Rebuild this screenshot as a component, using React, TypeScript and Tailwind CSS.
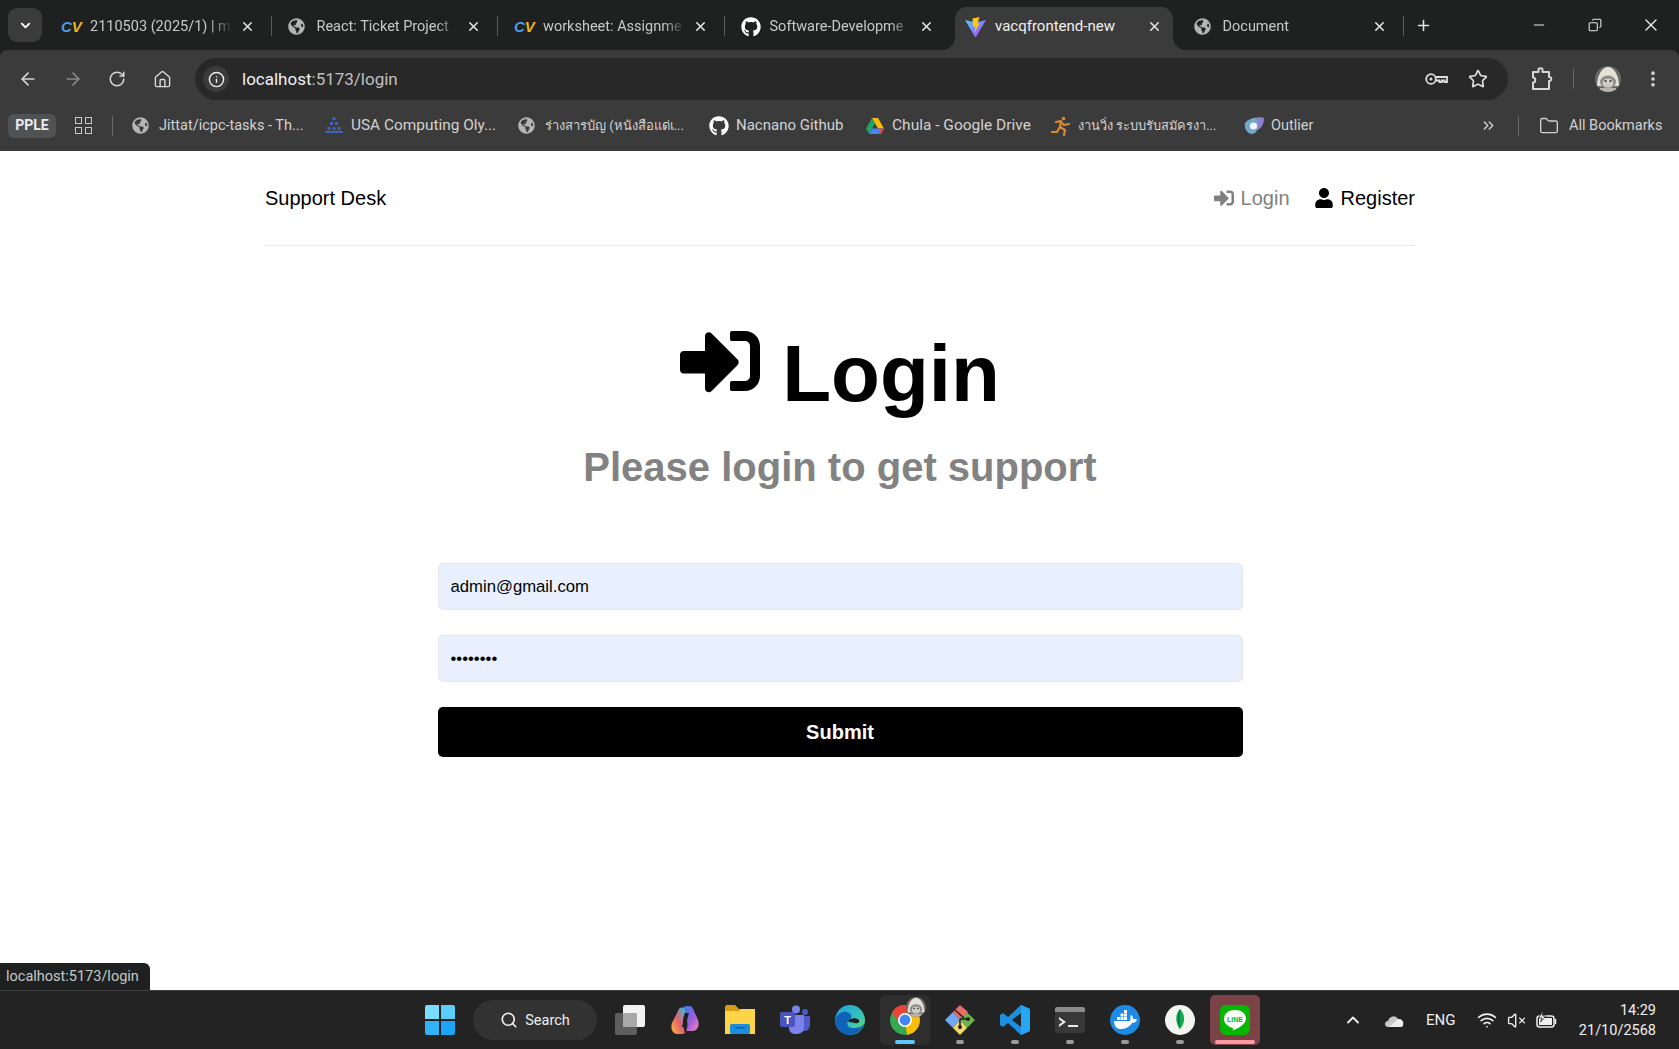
import React from 'react';
import { FaSignInAlt, FaUser, FaGithub, FaGlobeAmericas } from 'react-icons/fa';
import {
  ArrowLeft,
  ArrowRight,
  RotateCw,
  Home,
  Info,
  Star,
  EllipsisVertical,
  ChevronsRight,
  Folder,
  Plus,
  X,
  Minus,
  Copy,
  ChevronDown,
  ChevronUp,
  Search,
  Wifi,
  VolumeX,
} from 'lucide-react';

const ChromeFont = "font-['Roboto','Noto_Sans',sans-serif]";

const CvIcon = () => (
  <span className="w-[20px] shrink-0 text-[15px] font-bold italic leading-none font-['Liberation_Sans',sans-serif]">
    <span className="text-[#4d9be8]">C</span>
    <span className="text-[#f0b429]">V</span>
  </span>
);

const ViteIcon = () => (
  <svg width="21" height="20" viewBox="0 0 21 20" className="shrink-0">
    <defs>
      <linearGradient id="vitePurple" x1="0" y1="0" x2="1" y2="1">
        <stop offset="0" stopColor="#41d1ff" />
        <stop offset="1" stopColor="#bd34fe" />
      </linearGradient>
    </defs>
    <path d="M0 3 C4 4 8 5 10.5 5 C13 5 17 4 21 3 L11 20 H10 Z" fill="url(#vitePurple)" />
    <path d="M7.5 1.5 L14.5 0 L12.5 6.5 L15 6 L9.5 15.5 L10.5 9.5 L8 10 Z" fill="#ffc517" />
  </svg>
);

const tabs = [
  { icon: <CvIcon />, title: '2110503 (2025/1) | m' },
  { icon: <FaGlobeAmericas size={17} className="shrink-0 text-[#b5b5b5]" />, title: 'React: Ticket Project' },
  { icon: <CvIcon />, title: 'worksheet: Assignme' },
  { icon: <FaGithub size={20} className="shrink-0 text-white" />, title: 'Software-Developme' },
  { icon: <ViteIcon />, title: 'vacqfrontend-new', active: true },
  { icon: <FaGlobeAmericas size={17} className="shrink-0 text-[#b5b5b5]" />, title: 'Document' },
];

const DriveIcon = () => (
  <svg width="18" height="16" viewBox="0 0 18 16" className="shrink-0">
    <path d="M6 0 H12 L18 10.5 H12 Z" fill="#fbbc04" />
    <path d="M6 0 L0 10.5 L3 16 L9 5.5 Z" fill="#1fa463" />
    <path d="M3 16 H15 L18 10.5 H6 Z" fill="#4285f4" />
    <path d="M15 16 L18 10.5 H14.5 L13 16 Z" fill="#ea4335" />
  </svg>
);

const UsacoIcon = () => (
  <svg width="18" height="16" viewBox="0 0 18 16" className="shrink-0">
    <g fill="#3d64c4">
      <rect x="7.5" y="0" width="3" height="3" />
      <rect x="5" y="5" width="3" height="3" />
      <rect x="10" y="5" width="3" height="3" />
      <rect x="2.5" y="10" width="3" height="3" />
      <rect x="7.5" y="10" width="3" height="3" />
      <rect x="12.5" y="10" width="3" height="3" />
      <rect x="0" y="14" width="18" height="2" />
    </g>
  </svg>
);

const RunnerIcon = () => (
  <svg width="20" height="20" viewBox="0 0 20 20" className="shrink-0" fill="none" stroke="#d98a35" strokeWidth="2.2" strokeLinecap="round" strokeLinejoin="round">
    <circle cx="12.5" cy="2.5" r="1.8" fill="#d98a35" stroke="none" />
    <path d="M5 6 L10 5 L9 11 L14 14 L13 19" />
    <path d="M10 6 L13 9 L18 8" />
    <path d="M9 11 L6 16 L1 16" />
  </svg>
);

const OutlierIcon = () => (
  <svg width="20" height="20" viewBox="0 0 20 20" className="shrink-0">
    <path d="M9 2 C14 1 18 1 20 2 C20 8 17 14 12 14 Z" fill="#8a7fd0" />
    <path d="M1 7 C4 3 9 2 12 2 C16 8 14 18 8 18 C3 18 0 12 1 7 Z" fill="#6fa9c9" />
    <circle cx="9.5" cy="10" r="3.6" fill="#f4f4f4" />
  </svg>
);

const globeIcon = <FaGlobeAmericas size={17} className="shrink-0 text-[#b5b5b5]" />;

const bookmarks = [
  { icon: globeIcon, title: 'Jittat/icpc-tasks - Th...', className: 'w-[193px] gap-[10px]', textClass: '' },
  { icon: <UsacoIcon />, title: 'USA Computing Oly...', className: 'w-[193px] gap-[8px]', textClass: 'text-[15.4px]' },
  { icon: globeIcon, title: 'ร่างสารบัญ (หนังสือแด่เ...', className: 'w-[191px] gap-[10px]', textClass: 'text-[13px]' },
  { icon: <FaGithub size={20} className="shrink-0 text-white" />, title: 'Nacnano Github', className: 'w-[157px] gap-[7px]', textClass: 'text-[15px]' },
  { icon: <DriveIcon />, title: 'Chula - Google Drive', className: 'w-[185px] gap-[8px]', textClass: 'text-[15.5px]' },
  { icon: <RunnerIcon />, title: 'งานวิ่ง ระบบรับสมัครงา...', className: 'w-[193px] gap-[7px]', textClass: 'text-[12.8px]' },
  { icon: <OutlierIcon />, title: 'Outlier', className: 'w-[90px] gap-[7px]', textClass: '' },
];

function TabStrip() {
  return (
    <div className={`flex h-[50px] shrink-0 items-end bg-[#1f2120] ${ChromeFont}`}>
      <div className="mb-[8px] ml-[8px] mr-[5px] flex h-[34px] w-[34px] shrink-0 items-center justify-center rounded-[9px] bg-[#3b3b3b] text-white">
        <ChevronDown size={15} strokeWidth={3} />
      </div>
      {tabs.map((tab, i) =>
        tab.active ? (
          <div
            key={i}
            className="relative ml-[2px] mr-[6.5px] flex h-[43px] w-[218px] shrink-0 items-center rounded-t-[12px] bg-[#3b3b3b] pb-[4px] pl-[10px] pr-[11px] text-[#f0f0f0]"
          >
            <span className="absolute bottom-0 -left-[12px] h-[12px] w-[12px] bg-[radial-gradient(circle_at_0_0,transparent_11.5px,#3b3b3b_12px)]" />
            <span className="absolute bottom-0 -right-[12px] h-[12px] w-[12px] bg-[radial-gradient(circle_at_100%_0,transparent_11.5px,#3b3b3b_12px)]" />
            <span className="flex w-[30px] shrink-0 items-center">{tab.icon}</span>
            <span className="min-w-0 flex-1 overflow-hidden whitespace-nowrap text-[15px]">{tab.title}</span>
            <X size={15} strokeWidth={2.5} className="ml-[10px] shrink-0 text-[#e3e3e3]" />
          </div>
        ) : (
          <div key={i} className="relative flex h-[43px] w-[226.5px] shrink-0 items-center pb-[4px] pl-[14px] pr-[19px] text-[#c8c8c8]">
            <span className="flex w-[29px] shrink-0 items-center">{tab.icon}</span>
            <span className="min-w-0 flex-1 overflow-hidden whitespace-nowrap text-[14.5px] [mask-image:linear-gradient(to_right,black_85%,transparent)]">
              {tab.title}
            </span>
            <X size={15} strokeWidth={2.5} className="ml-[8px] shrink-0 text-[#e3e3e3]" />
            {i !== 3 && <span className="absolute right-[2px] top-[9px] h-[20px] w-px bg-[#5a5a5a]" />}
          </div>
        ),
      )}
      <div className="mb-[8px] ml-[9px] flex h-[34px] items-center text-[#e3e3e3]">
        <Plus size={17} strokeWidth={2.2} />
      </div>
      <div className="mb-[8px] ml-auto flex h-[34px] items-center text-[#e8e8e8]">
        <span className="flex w-[56px] justify-center"><Minus size={16} strokeWidth={1.8} /></span>
        <span className="flex w-[56px] justify-center"><Copy size={14} strokeWidth={1.8} className="-scale-x-100" /></span>
        <span className="flex w-[56px] justify-center"><X size={20} strokeWidth={1.6} /></span>
      </div>
    </div>
  );
}

const KeyIcon = () => (
  <svg width="23" height="14" viewBox="0 0 23 14" fill="none" stroke="#dddddd" strokeWidth="1.8" className="ml-auto">
    <circle cx="6" cy="7" r="4.8" />
    <circle cx="6" cy="7" r="1.5" fill="#dddddd" stroke="none" />
    <path d="M11 5 H22 V10 H19.5 V8.5 H17 V10 H14.5 V8.5 H11" />
  </svg>
);

const ExtensionIcon = () => (
  <svg width="22" height="24" viewBox="0 0 22 24" fill="none" stroke="#d6d6d6" strokeWidth="2" strokeLinejoin="round" className="ml-[23px]">
    <path d="M2 5 H7.5 V2.5 C7.5 0.8 11.5 0.8 11.5 2.5 V5 H18 V10 C21 9.5 21 14.5 18 14 V22 H2 V15.5 C5 15.5 5 10.5 2 10.5 Z" />
  </svg>
);

const Avatar = ({ size, className }: { size: number; className?: string }) => (
  <svg width={size} height={size} viewBox="0 0 26 26" className={className}>
    <defs>
      <clipPath id={`avatarClip${size}`}>
        <circle cx="13" cy="13" r="13" />
      </clipPath>
    </defs>
    <g clipPath={`url(#avatarClip${size})`}>
      <rect width="26" height="26" fill="#6d6a66" />
      <path d="M2 20 C2 8 8 1 13 1 C18 1 24 8 24 20 Z" fill="#e4e0d8" />
      <ellipse cx="13" cy="16" rx="8" ry="6.5" fill="#8d8a85" />
      <ellipse cx="13" cy="17" rx="5.5" ry="4.5" fill="#cfcbc4" />
      <circle cx="10.5" cy="15" r="1" fill="#2d2b29" />
      <circle cx="15.5" cy="15" r="1" fill="#2d2b29" />
      <rect x="5" y="22" width="16" height="4" fill="#b8b4ad" />
    </g>
  </svg>
);

function Toolbar() {
  return (
    <div className={`flex h-[50px] shrink-0 items-start rounded-t-[8px] bg-[#3b3b3b] pt-[8px] text-[#d6d6d6] ${ChromeFont}`}>
      <div className="flex h-[42px] items-center pl-[18px]">
        <span className="w-[45px]"><ArrowLeft size={20} strokeWidth={2} /></span>
        <span className="w-[45px] text-[#8a8a8a]"><ArrowRight size={20} strokeWidth={2} /></span>
        <span className="w-[45px]"><RotateCw size={18} strokeWidth={2} /></span>
        <span className="w-[42px]"><Home size={19} strokeWidth={1.8} /></span>
      </div>
      <div className="flex h-[42px] w-[1313px] items-center rounded-full bg-[#282828] pl-[8px] pr-[20px]">
        <span className="flex h-[26px] w-[26px] items-center justify-center rounded-full bg-[#3b3b3b] text-[#eeeeee]">
          <Info size={17} strokeWidth={2} />
        </span>
        <span className="ml-[13px] pt-[1px] text-[17px] text-[#f0f0f0]">
          localhost<span className="text-[#c0c0c0]">:5173/login</span>
        </span>
        <KeyIcon />
        <Star size={20} strokeWidth={2} className="ml-[20px] text-[#dddddd]" />
      </div>
      <div className="flex h-[42px] items-center">
        <ExtensionIcon />
        <span className="ml-[20px] h-[20px] w-px bg-[#6a6a6a]" />
        <Avatar size={26} className="ml-[21px]" />
        <EllipsisVertical size={20} strokeWidth={2.4} className="ml-[22px]" />
      </div>
    </div>
  );
}

function BookmarksBar() {
  return (
    <div className={`flex h-[51px] shrink-0 items-center bg-[#3b3b3b] text-[14.5px] text-[#d2d2d2] ${ChromeFont}`}>
      <span className="ml-[8px] flex h-[24px] w-[48px] items-center justify-center rounded-[6px] bg-[#505356] text-[14px] font-bold text-[#ececec]">
        PPLE
      </span>
      <span className="ml-[19px] grid grid-cols-2 gap-[3px]">
        <span className="h-[7px] w-[7px] border-[1.5px] border-[#c8c8c8]" />
        <span className="h-[7px] w-[7px] border-[1.5px] border-[#c8c8c8]" />
        <span className="h-[7px] w-[7px] border-[1.5px] border-[#c8c8c8]" />
        <span className="h-[7px] w-[7px] border-[1.5px] border-[#c8c8c8]" />
      </span>
      <span className="ml-[20px] h-[20px] w-px bg-[#6a6a6a]" />
      <div className="ml-[19px] flex items-center">
        {bookmarks.map((b) => (
          <div key={b.title} className={`flex shrink-0 items-center ${b.className}`}>
            {b.icon}
            <span className={`whitespace-nowrap ${b.textClass}`}>{b.title}</span>
          </div>
        ))}
      </div>
      <ChevronsRight size={17} className="ml-[146px] text-[#cfcfcf]" />
      <span className="ml-[21px] h-[20px] w-px bg-[#6a6a6a]" />
      <Folder size={20} strokeWidth={1.6} className="ml-[20px]" />
      <span className="ml-[10px] whitespace-nowrap">All Bookmarks</span>
    </div>
  );
}

function LoginPage() {
  return (
    <main className="relative min-h-0 flex-1 overflow-hidden bg-white pl-px font-['Liberation_Sans',Arial,sans-serif] text-black">
      <div className="mx-auto w-[1150px]">
        <header className="mb-[80px] flex h-[95px] items-center justify-between border-b border-[#e6e6e6] text-[20px]">
          <span>Support Desk</span>
          <ul className="flex items-center gap-[24px]">
            <li className="flex items-center gap-[7px] text-[#808080]">
              <FaSignInAlt size={20} /> Login
            </li>
            <li className="flex items-center gap-[7px]">
              <FaUser size={20} /> Register
            </li>
          </ul>
        </header>
        <section className="mb-[72px] text-center font-bold">
          <h1 className="mb-[21px] flex items-center justify-center gap-[22px] text-[80px] leading-[96px]">
            <FaSignInAlt size={80} className="-mt-[26px]" /> Login
          </h1>
          <p className="text-[40px] leading-[48px] text-[#828282]">Please login to get support</p>
        </section>
        <form className="mx-auto flex w-[805px] flex-col gap-[25px]" onSubmit={(e) => e.preventDefault()}>
          <input
            type="email"
            readOnly
            value="admin@gmail.com"
            className="h-[47px] w-full rounded-[5px] border border-[#e6e6e6] bg-[#e8f0fe] px-[12px] text-[16.7px] text-black outline-none"
          />
          <input
            type="password"
            readOnly
            value="password"
            className="h-[47px] w-full rounded-[5px] border border-[#e6e6e6] bg-[#e8f0fe] px-[12px] text-[16.7px] text-black outline-none"
          />
          <button type="submit" className="h-[50px] w-full rounded-[5px] bg-black text-[20px] font-bold text-white">
            Submit
          </button>
        </form>
      </div>
      <div className={`absolute bottom-0 left-0 flex h-[27px] w-[150px] items-center rounded-tr-[6px] bg-[#1f2120] pl-[6px] pt-[1px] text-[14.5px] text-[#c8c8c8] ${ChromeFont}`}>
        localhost:5173/login
      </div>
    </main>
  );
}

const WindowsIcon = () => (
  <span className="grid h-[30px] w-[30px] grid-cols-2 gap-[1.5px]">
    <span className="rounded-tl-[2px] bg-[#7adcfb]" />
    <span className="rounded-tr-[2px] bg-[#5ccdfa]" />
    <span className="rounded-bl-[2px] bg-[#2fb4f7]" />
    <span className="rounded-br-[2px] bg-[#1ea4f4]" />
  </span>
);

const TaskIcons: { key: string; node: React.ReactNode; dot?: boolean }[] = [
  {
    key: 'taskview',
    node: (
      <svg width="30" height="30" viewBox="0 0 30 30">
        <rect x="0" y="8" width="22" height="22" rx="2" fill="#5d5d5d" />
        <rect x="8" y="0" width="22" height="22" rx="2" fill="#f2f2f2" />
        <rect x="8" y="8" width="14" height="14" rx="1" fill="#a8a8a8" />
      </svg>
    ),
  },
  {
    key: 'copilot',
    node: (
      <svg width="30" height="30" viewBox="0 0 30 30">
        <defs>
          <linearGradient id="copA" x1="0" y1="0" x2="1" y2="1">
            <stop offset="0" stopColor="#2f7fe8" />
            <stop offset="0.55" stopColor="#a05be0" />
            <stop offset="1" stopColor="#f08ab0" />
          </linearGradient>
          <linearGradient id="copB" x1="0" y1="1" x2="1" y2="0">
            <stop offset="0" stopColor="#f7c033" />
            <stop offset="0.5" stopColor="#e85f70" />
            <stop offset="1" stopColor="#34c0d8" />
          </linearGradient>
        </defs>
        <path d="M13 3 C14 1 16 1 19 1 C22 1 23 3 24 6 L28 15 C30 21 27 26 22 26 H16 C19 20 17 10 13 3 Z" fill="url(#copA)" />
        <path d="M9 4 C11 2 14 2 15 5 L15 8 C12 14 13 22 15 28 C14 29 11 29 8 29 C3 29 0 24 2 18 Z" fill="url(#copB)" />
        <path d="M15 8 L19 8 L15 22 L12 22 Z" fill="#1f1f1f" />
      </svg>
    ),
  },
  {
    key: 'explorer',
    node: (
      <svg width="30" height="30" viewBox="0 0 30 30">
        <path d="M0 2 C0 1 1 0 2 0 H10 L14 4 H30 V28 H0 Z" fill="#d99b12" />
        <path d="M0 6 H14 L16 4 H30 V29 H0 Z" fill="#ffd447" />
        <rect x="5" y="19" width="20" height="10" rx="1.5" fill="#1c8fdc" />
        <rect x="10" y="22" width="10" height="1.5" fill="#0c5e9e" />
      </svg>
    ),
  },
  {
    key: 'teams',
    node: (
      <svg width="30" height="30" viewBox="0 0 30 30">
        <circle cx="16" cy="4.5" r="4" fill="#7b83eb" />
        <circle cx="25" cy="7" r="3" fill="#5059c9" />
        <path d="M20 11 H30 V20 C30 24 27 26 24 26 C22 26 20 24 20 21 Z" fill="#5059c9" />
        <path d="M9 10 H24 V23 C24 27 20 29 16 29 C12 29 9 27 9 23 Z" fill="#7b83eb" />
        <rect x="0" y="7" width="15" height="15" rx="2" fill="#4b53bc" />
        <text x="7.5" y="19" fontSize="11" fontWeight="700" textAnchor="middle" fill="#ffffff" fontFamily="Liberation Sans">T</text>
      </svg>
    ),
  },
  {
    key: 'edge',
    node: (
      <svg width="30" height="30" viewBox="0 0 30 30">
        <defs>
          <linearGradient id="edgeA" x1="0" y1="0" x2="1" y2="1">
            <stop offset="0" stopColor="#1f9fe0" />
            <stop offset="0.6" stopColor="#35c4b8" />
            <stop offset="1" stopColor="#6fe05f" />
          </linearGradient>
        </defs>
        <circle cx="15" cy="15" r="15" fill="url(#edgeA)" />
        <path d="M30 17 C28 26 20 30 15 30 C6 30 0 23 0 15 C2 8 9 5 14 8 C19 11 15 14 13 16 C11 19 13 23 18 23 C23 23 28 22 30 17 Z" fill="#0e63b8" />
        <path d="M13 16 C15 13 21 12 24 15 C25 17 23 19 20 18 C17 17 14 18 13 16 Z" fill="#1f1f1f" />
      </svg>
    ),
  },
  {
    key: 'chrome',
    dot: true,
    node: (
      <span className="relative block h-[30px] w-[30px]">
        <svg width="30" height="30" viewBox="0 0 30 30">
          <circle cx="15" cy="15" r="15" fill="#34a853" />
          <path d="M15 15 L28 8 A15 15 0 0 1 17 30 Z" fill="#fbbc04" />
          <path d="M2 7.5 A15 15 0 0 1 28 7.5 L15 7.5 L9 18 Z" fill="#ea4335" />
          <circle cx="15" cy="15" r="7" fill="#ffffff" />
          <circle cx="15" cy="15" r="5.4" fill="#4285f4" />
        </svg>
        <Avatar size={20} className="absolute -right-[6px] -top-[8px]" />
      </span>
    ),
  },
  {
    key: 'gitkraken',
    dot: true,
    node: (
      <svg width="30" height="30" viewBox="0 0 30 30">
        <path d="M0 15 L8 7 L15 15 L8 23 Z" fill="#6fa8f5" />
        <path d="M15 0 L23 7 L15 15 L8 7 Z" fill="#ef6b68" />
        <path d="M15 15 L22 7.5 L30 15 L22 23 Z" fill="#6fb34f" />
        <path d="M8 23 L15 15 L22 23 L15 30 Z" fill="#f6d868" />
        <path d="M10 5 L19 13 M15 14 V24 M15 14 L23 14" stroke="#232323" strokeWidth="1.6" fill="none" />
        <circle cx="15" cy="22" r="2" fill="#232323" />
        <circle cx="23" cy="14" r="2" fill="#232323" />
      </svg>
    ),
  },
  {
    key: 'vscode',
    dot: true,
    node: (
      <svg width="30" height="30" viewBox="0 0 30 30">
        <path d="M21 0 L30 4 V26 L21 30 L8 18 L3 22 L0 20 V10 L3 8 L8 12 Z M21 8 L12 15 L21 22 Z" fill="#1b8fe0" fillRule="evenodd" />
        <path d="M21 0 L30 4 V26 L21 30 V22 V8 Z" fill="#25a7f2" />
      </svg>
    ),
  },
  {
    key: 'terminal',
    dot: true,
    node: (
      <svg width="30" height="26" viewBox="0 0 30 26">
        <rect x="0" y="0" width="30" height="26" rx="2" fill="#383838" />
        <path d="M0 2 C0 1 1 0 2 0 H28 C29 0 30 1 30 2 V5 H0 Z" fill="#8a8a8a" />
        <path d="M4 10 L11 15 L4 20 V17.5 L7.5 15 L4 12.5 Z" fill="#e8e8e8" />
        <rect x="13" y="18" width="10" height="2" fill="#e8e8e8" />
      </svg>
    ),
  },
  {
    key: 'docker',
    dot: true,
    node: (
      <svg width="30" height="30" viewBox="0 0 30 30">
        <circle cx="15" cy="15" r="15" fill="#1d8ae6" />
        <g fill="#ffffff">
          <rect x="7" y="12" width="3" height="3" />
          <rect x="10.5" y="12" width="3" height="3" />
          <rect x="14" y="12" width="3" height="3" />
          <rect x="10.5" y="8.5" width="3" height="3" />
          <rect x="14" y="8.5" width="3" height="3" />
          <rect x="14" y="5" width="3" height="3" />
          <path d="M4 16 H20 C21 14 20 11 21 10 C23 11 23 13 23 14 C25 14 27 14 27 15 C26 17 24 18 22 18 C19 23 14 24 10 24 C7 24 4 21 4 16 Z" />
        </g>
      </svg>
    ),
  },
  {
    key: 'mongo',
    dot: true,
    node: (
      <svg width="30" height="30" viewBox="0 0 30 30">
        <circle cx="15" cy="15" r="15" fill="#f4f4f1" />
        <path d="M15 4 C20 9 21 17 15 24 C10 18 10 9 15 4 Z" fill="#13aa52" />
        <path d="M15 4 C12 10 12 18 15 24 V28 Z" fill="#0c7c3a" />
      </svg>
    ),
  },
  {
    key: 'line',
    node: (
      <svg width="30" height="30" viewBox="0 0 30 30">
        <rect x="0" y="0" width="30" height="30" rx="6" fill="#06b700" />
        <path d="M15 5 C8 5 4 9 4 14 C4 19 9 22 13 23 C13 25 12 26 14 25 C17 24 26 19 26 14 C26 9 22 5 15 5 Z" fill="#ffffff" />
        <text x="15" y="16.5" fontSize="7" fontWeight="700" textAnchor="middle" fill="#06b700" fontFamily="Liberation Sans">LINE</text>
      </svg>
    ),
  },
];

const BatteryIcon = () => (
  <svg width="21" height="18" viewBox="0 0 21 18" fill="none" stroke="#f0f0f0" strokeWidth="1.5" className="ml-[10px]">
    <rect x="1" y="5" width="17" height="11" rx="2.5" />
    <rect x="3" y="7" width="13" height="7" fill="#f0f0f0" stroke="none" />
    <path d="M19.5 8.5 V12.5" strokeLinecap="round" />
    <path d="M7 0 L2.5 7 H6 L4.5 11 L10 5 H6.5 Z" fill="#f0f0f0" stroke="#232323" strokeWidth="0.8" />
  </svg>
);

function Taskbar() {
  return (
    <footer className={`flex h-[59px] shrink-0 items-center border-t border-[#3f3f3f] bg-[#232323] text-[#f0f0f0] ${ChromeFont}`}>
      <div className="ml-[425px] flex items-center">
        <WindowsIcon />
        <div className="ml-[18px] flex h-[40px] w-[124px] items-center justify-center gap-[7px] rounded-full bg-[#323232] text-[14.5px]">
          <Search size={18} strokeWidth={2.2} /> <span className="pt-[1px]">Search</span>
        </div>
        <div className="ml-[8px] flex items-center">
          {TaskIcons.map((t) => (
            <div
              key={t.key}
              className={`relative flex h-[50px] w-[50px] items-center justify-center rounded-[5px] [&:not(:first-child)]:ml-[5px] ${
                t.key === 'chrome' ? 'bg-[#2e2e2e]' : t.key === 'line' ? 'bg-[#7a4347]' : ''
              }`}
            >
              {t.node}
              {t.key === 'chrome' && <span className="absolute bottom-[1px] h-[4px] w-[20px] rounded-full bg-[#5cc8fa]" />}
              {t.key === 'line' && <span className="absolute bottom-[1px] h-[4px] w-[40px] rounded-full bg-[#ff9aa2]" />}
              {t.dot && t.key !== 'chrome' && <span className="absolute bottom-[1px] h-[4px] w-[8px] rounded-full bg-[#9a9a9a]" />}
            </div>
          ))}
        </div>
      </div>
      <div className="ml-[83px] flex items-center">
        <ChevronUp size={20} strokeWidth={2.2} />
        <svg width="20" height="13" viewBox="0 0 20 13" className="ml-[21px]">
          <path d="M4 13 C0 13 0 7 4 7 C5 2 12 1 14 5 C18 5 20 8 19 11 C19 12 18 13 16 13 Z" fill="#c8c8c8" />
          <path d="M5 13 L14 5 C18 5 20 8 19 11 C19 12 18 13 16 13 Z" fill="#eeeeee" />
        </svg>
        <span className="ml-[22px] pt-[1px] text-[15px]">ENG</span>
        <Wifi size={20} strokeWidth={2} className="ml-[22px]" />
        <VolumeX size={19} strokeWidth={1.7} className="ml-[10px]" />
        <BatteryIcon />
      </div>
      <div className="ml-[10px] flex flex-1 flex-col items-end pr-[23px] pt-[2px] text-[14.5px] leading-[20px]">
        <span>14:29</span>
        <span>21/10/2568</span>
      </div>
    </footer>
  );
}

export default function App() {
  return (
    <div className="flex h-screen flex-col overflow-hidden bg-[#1f2120]">
      <TabStrip />
      <Toolbar />
      <BookmarksBar />
      <LoginPage />
      <Taskbar />
    </div>
  );
}
